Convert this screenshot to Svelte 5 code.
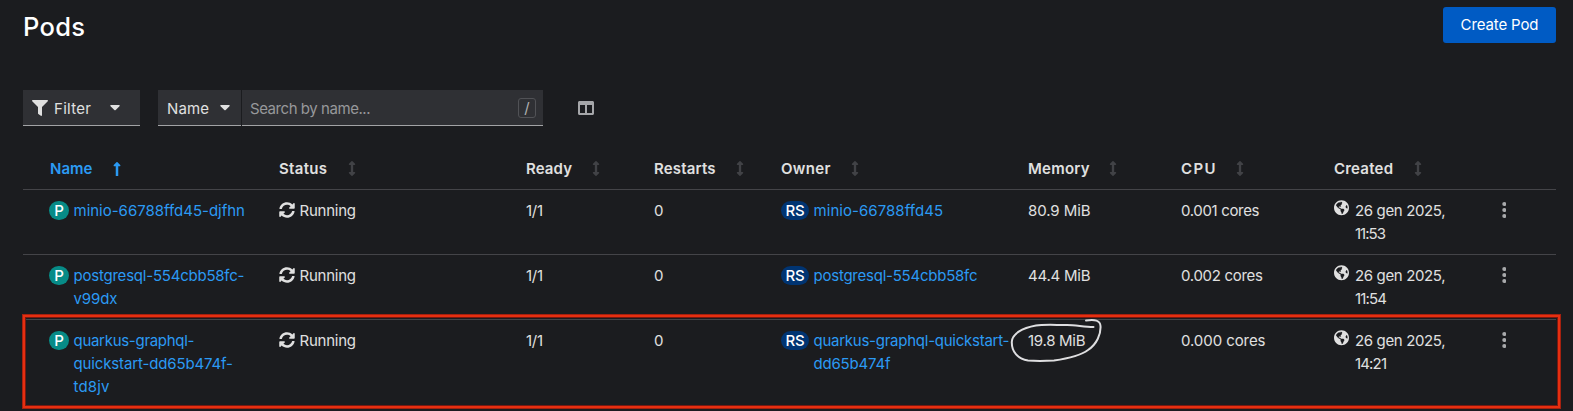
<script>
  const paths = {
    filter: ['0 0 512 512', 'M487.976 0H24.028C2.71 0-8.047 25.866 7.058 40.971L192 225.941V432c0 7.831 3.821 15.17 10.237 19.662l80 55.98C298.02 518.69 320 507.493 320 487.98V225.941l184.947-184.97C520.021 25.896 509.338 0 487.976 0z'],
    columns: ['0 0 512 512', 'M464 32H48C21.49 32 0 53.49 0 80v352c0 26.51 21.49 48 48 48h416c26.51 0 48-21.49 48-48V80c0-26.51-21.49-48-48-48zM224 416H64V160h160v256zm224 0H288V160h160v256z'],
    caret: ['0 0 10 6', 'M1 0H9Q10.4 .2 9.4 1.3L5.7 5Q5 5.6 4.3 5L.6 1.3Q-.4 .2 1 0z'],
    sync: ['0 0 512 512', 'M370.72 133.28C339.458 104.008 298.888 87.962 255.848 88c-77.458.068-144.328 53.178-162.791 126.85-1.344 5.363-6.122 9.15-11.651 9.15H24.103c-7.498 0-13.194-6.807-11.807-14.176C33.933 94.924 134.813 8 256 8c66.448 0 126.791 26.136 171.315 68.685L463.03 40.97C478.149 25.851 504 36.559 504 57.941V192c0 13.255-10.745 24-24 24H345.941c-21.382 0-32.09-25.851-16.971-40.971l41.75-41.749zM32 296h134.059c21.382 0 32.09 25.851 16.971 40.971l-41.75 41.75c31.262 29.273 71.835 45.319 114.876 45.28 77.418-.07 144.315-53.144 162.787-126.849 1.344-5.363 6.122-9.15 11.651-9.15h57.304c7.498 0 13.194 6.807 11.807 14.176C478.067 417.076 377.187 504 256 504c-66.448 0-126.791-26.136-171.315-68.685L48.97 471.03C33.851 486.149 8 475.441 8 454.059V320c0-13.255 10.745-24 24-24z'],
    globe: ['0 0 496 512', 'M248 8C111.03 8 0 119.03 0 256s111.03 248 248 248 248-111.03 248-248S384.97 8 248 8zm82.29 357.6c-3.9 3.88-7.99 7.95-11.31 11.28-2.99 3-5.1 6.7-6.17 10.71-1.51 5.66-2.73 11.38-4.77 16.87l-17.39 46.85c-13.76 3-28 4.69-42.65 4.69v-27.38c1.69-12.62-7.64-36.26-22.63-51.25-6-6-9.37-14.14-9.37-22.63v-32.01c0-11.64-6.27-22.34-16.46-27.97-14.37-7.95-34.81-19.06-48.81-26.11-11.48-5.78-22.1-13.14-31.65-21.75l-.8-.72a114.792 114.792 0 0 1-18.06-20.74c-9.38-13.77-24.66-36.42-34.59-51.14 20.47-45.5 57.36-82.04 103.2-101.89l24.01 12.01C203.48 89.74 216 82.01 216 70.11v-11.3c7.99-1.29 16.12-2.11 24.39-2.42l28.3 28.3c6.25 6.25 6.25 16.38 0 22.63L264 112l-10.34 10.34c-3.12 3.12-3.12 8.19 0 11.31l4.69 4.69c3.12 3.12 3.12 8.19 0 11.31l-8 8a8.008 8.008 0 0 1-5.66 2.34h-8.99c-2.08 0-4.08.81-5.58 2.27l-9.92 9.65a8.008 8.008 0 0 0-1.58 9.31l15.59 31.19c2.66 5.32-1.21 11.58-7.15 11.58h-5.64c-1.93 0-3.79-.7-5.24-1.96l-9.28-8.06a16.017 16.017 0 0 0-15.55-3.1l-31.17 10.39a11.95 11.95 0 0 0-8.17 11.34c0 4.53 2.56 8.66 6.61 10.69l11.08 5.54c9.41 4.71 19.79 7.16 30.31 7.16s22.59 27.29 32 32h66.75c8.49 0 16.62 3.37 22.63 9.37l13.69 13.69a30.503 30.503 0 0 1 8.93 21.57 46.536 46.536 0 0 1-13.72 32.98zM417 274.25c-5.79-1.45-10.84-5-14.15-9.97l-17.98-26.97a23.97 23.97 0 0 1 0-26.62l19.59-29.38c2.32-3.47 5.5-6.29 9.24-8.15l12.98-6.49C440.2 193.59 448 223.87 448 256c0 8.67-.74 17.16-1.82 25.54L417 274.25z'],
    sort: ['0 0 256 512', 'M214.059 377.941H168V134.059h46.059c21.382 0 32.09-25.851 16.971-40.971L144.971 7.029c-9.373-9.373-24.568-9.373-33.941 0L24.971 93.088c-15.119 15.119-4.411 40.971 16.971 40.971H88v243.882H41.941c-21.382 0-32.09 25.851-16.971 40.971l86.059 86.059c9.373 9.373 24.568 9.373 33.941 0l86.059-86.059c15.12-15.119 4.412-40.971-16.97-40.971z'],
    up: ['0 0 256 512', 'M88 166.059V468c0 6.627 5.373 12 12 12h56c6.627 0 12-5.373 12-12V166.059h46.059c21.382 0 32.09-25.851 16.971-40.971l-86.059-86.059c-9.373-9.373-24.569-9.373-33.941 0l-86.059 86.059c-15.119 15.119-4.411 40.971 16.971 40.971H88z'],
    kebab: ['0 0 4 16', 'M2 0a2 2 0 1 1 0 4a2 2 0 1 1 0-4zM2 6a2 2 0 1 1 0 4a2 2 0 1 1 0-4zM2 12a2 2 0 1 1 0 4a2 2 0 1 1 0-4z'],
  };

  // Spreads the letters of a label so that it spans the given width.
  function track(node, width) {
    const natural = node.getBoundingClientRect().width;
    const n = node.textContent.length;
    if (n > 1) node.style.letterSpacing = (width - natural) / (n - 1) + 'px';
  }

  const heads = [
    ['Name', 42.5, 20.5], ['Status', 48, 20.5], ['Ready', 46, 19.5], ['Restarts', 61.5, 20],
    ['Owner', 49.5, 20], ['Memory', 61.5, 19], ['CPU', 34.5, 19.5], ['Created', 59, 21],
  ];

  const pods = [
    {
      name: [['minio-66788ffd45-djfhn', 171.5]],
      owner: [['minio-66788ffd45', 129.5]],
      memory: ['80.9 MiB', 62.5], cpu: ['0.001 cores', 78.5],
      created: [['26 gen 2025,', 90.5], ['11:53', 31]],
    },
    {
      name: [['postgresql-554cbb58fc-', 171], ['v99dx', 44]],
      owner: [['postgresql-554cbb58fc', 164]],
      memory: ['44.4 MiB', 62.5], cpu: ['0.002 cores', 82],
      created: [['26 gen 2025,', 90.5], ['11:54', 32]],
    },
    {
      name: [['quarkus-graphql-', 121], ['quickstart-dd65b474f-', 159.5], ['td8jv', 36]],
      owner: [['quarkus-graphql-quickstart-', 196], ['dd65b474f', 77]],
      memory: ['19.8 MiB', 57.5], cpu: ['0.000 cores', 84.5],
      created: [['26 gen 2025,', 90.5], ['14:21', 32]],
      marked: true,
    },
  ];
</script>

{#snippet icon(name, w, h)}
  <svg class="icon" width={w} height={h} viewBox={paths[name][0]} aria-hidden="true"><path d={paths[name][1]} /></svg>
{/snippet}

{#snippet label(text, width)}<span class="label" use:track={width}>{text}</span>{/snippet}

{#snippet lines(items)}
  <span class="lines">
    {#each items as [text, width]}{@render label(text, width)}{/each}
  </span>
{/snippet}

<main>
  <header>
    <h1>{@render label('Pods', 62)}</h1>
    <button class="create">{@render label('Create Pod', 78)}</button>
  </header>

  <div class="toolbar">
    <button class="control filter">
      {@render icon('filter', 16, 16)}
      {@render label('Filter', 37)}
      {@render icon('caret', 10, 6)}
    </button>
    <button class="control kind">
      {@render label('Name', 42)}
      {@render icon('caret', 10, 6)}
    </button>
    <div class="control search">
      {@render label('Search by name...', 120.5)}
      <kbd>/</kbd>
    </div>
    <button class="manage">{@render icon('columns', 16, 16)}</button>
  </div>

  <section class="table">
    <div class="row head">
      {#each heads as [text, width, gap], i}
        <div class="cell" class:active={i === 0} style="gap: {gap}px">
          {@render label(text, width)}
          {@render icon(i === 0 ? 'up' : 'sort', 8, i === 0 ? 16 : 15)}
        </div>
      {/each}
      <div></div>
    </div>

    {#each pods as pod}
      <div class="row body" class:marked={pod.marked}>
        <div class="cell link"><b class="badge pod">P</b>{@render lines(pod.name)}</div>
        <div class="cell status">{@render icon('sync', 16, 16)}{@render label('Running', 56.5)}</div>
        <div class="cell">{@render label('1/1', 17)}</div>
        <div class="cell">{@render label('0', 10)}</div>
        <div class="cell link owner"><b class="badge rs">RS</b>{@render lines(pod.owner)}</div>
        <div class="cell memory">
          {@render label(pod.memory[0], pod.memory[1])}
          {#if pod.marked}
            <svg class="scribble" width="96" height="48" viewBox="0 0 96 48" aria-hidden="true">
              <path d="M85.5 11C76 11 68 9 59 9C47 9 35 8.3 28 9.5C14 12 4 18 3.8 26C3.6 36 10 43 20 44.5C28 45.2 38 45 46 44.5C60 42.5 72 40 80 34C89 28 93 18 92.5 10C92 4 87 3.5 78 4.5" />
            </svg>
          {/if}
        </div>
        <div class="cell">{@render label(pod.cpu[0], pod.cpu[1])}</div>
        <div class="cell created">{@render icon('globe', 15, 15.5)}{@render lines(pod.created)}</div>
        <div class="cell actions">{@render icon('kebab', 4.5, 16)}</div>
      </div>
    {/each}
  </section>
</main>

<style>
  :global(body) {
    background: #1b1c1f;
  }
  main {
    box-sizing: border-box;
    height: 411px;
    overflow: hidden;
    padding: 7px 17px 0 23px;
    color: #e0e0e0;
    font: 15px/23px Inter, 'Liberation Sans', sans-serif;
  }
  button {
    border: 0;
    padding: 0;
    font: inherit;
    color: inherit;
    background: none;
  }
  .label {
    display: inline-block;
    white-space: pre;
  }
  .icon {
    display: block;
    flex: none;
    fill: currentColor;
  }
  header {
    display: flex;
    justify-content: space-between;
    height: 36px;
  }
  h1 {
    margin: 2px 0 0;
    color: #fff;
    font-size: 25.5px;
    font-weight: 500;
    line-height: 36px;
  }
  .create {
    width: 113px;
    height: 36px;
    padding-bottom: 1px;
    border-radius: 3px;
    color: #fff;
    background: #005bc4;
  }
  .toolbar {
    display: flex;
    height: 36px;
    margin-top: 47px;
  }
  .control {
    box-sizing: border-box;
    display: flex;
    align-items: center;
    height: 36px;
    border-bottom: 1px solid #a2a3a5;
    background: #2f3034;
  }
  .control > .label {
    padding-top: 1px;
  }
  .filter {
    width: 117px;
    margin-right: 18px;
    padding-left: 9px;
    gap: 6px;
  }
  .filter .label {
    margin-right: 13px;
  }
  .kind {
    width: 83px;
    margin-right: 1px;
    padding-left: 9px;
    gap: 10.5px;
  }
  .search {
    width: 301px;
    padding: 0 7px 0 8px;
    justify-content: space-between;
    color: #97989b;
  }
  kbd {
    box-sizing: border-box;
    width: 18px;
    height: 20px;
    border: 1px solid #515256;
    border-radius: 3px;
    color: #b0b0b2;
    font: 15px/17px Inter, sans-serif;
    text-align: center;
  }
  .manage {
    margin-left: 35px;
    color: #a5a6a9;
  }
  .row {
    display: grid;
    grid-template-columns: 230px 247px 128px 127px 247px 153px 153px 162px 60px;
    box-sizing: border-box;
    width: 1533px;
    padding-left: 26px;
    border-bottom: 1px solid #444448;
  }
  .head {
    height: 64px;
    font-weight: 600;
  }
  .head .cell {
    align-items: center;
    padding-top: 22px;
  }
  .head .icon {
    color: #414246;
  }
  .head .active,
  .head .active .icon {
    color: #2b9af3;
  }
  .head .active {
    padding-left: 1px;
  }
  .cell {
    display: flex;
    align-items: flex-start;
  }
  .body {
    height: 65px;
    padding-top: 10px;
  }
  .body > .cell > .label,
  .lines {
    margin-top: -1px;
  }
  .marked {
    position: relative;
    height: 90px;
    border-bottom: 0;
  }
  .marked::after {
    content: '';
    position: absolute;
    inset: -6px -5px auto -1px;
    box-sizing: border-box;
    height: 95px;
    border: 3px solid #e62f10;
    outline: 1px solid #a52110;
    outline-offset: -1px;
    box-shadow: inset 0 0 0 1px #7a1810;
  }
  .lines {
    display: flex;
    flex-direction: column;
    align-items: flex-start;
  }
  .link {
    gap: 4.5px;
    color: #2b9af3;
  }
  .badge {
    box-sizing: border-box;
    width: 20px;
    height: 19px;
    margin-top: 1px;
    border-radius: 10px;
    color: #fff;
    font-weight: 500;
    line-height: 19px;
    text-align: center;
  }
  .pod {
    background: #078b87;
  }
  .rs {
    width: 28px;
    background: #003472;
    letter-spacing: -0.3px;
  }
  .status {
    gap: 4.5px;
  }
  .status .icon {
    margin-top: 2px;
  }
  .memory {
    position: relative;
  }
  .scribble {
    position: absolute;
    left: -20px;
    top: -14px;
    fill: none;
    stroke: #dedee0;
    stroke-width: 2;
    stroke-linecap: round;
  }
  .created {
    gap: 6px;
  }
  .actions {
    padding: 1.5px 0 0 5.5px;
    color: #a8a9ab;
  }
</style>
